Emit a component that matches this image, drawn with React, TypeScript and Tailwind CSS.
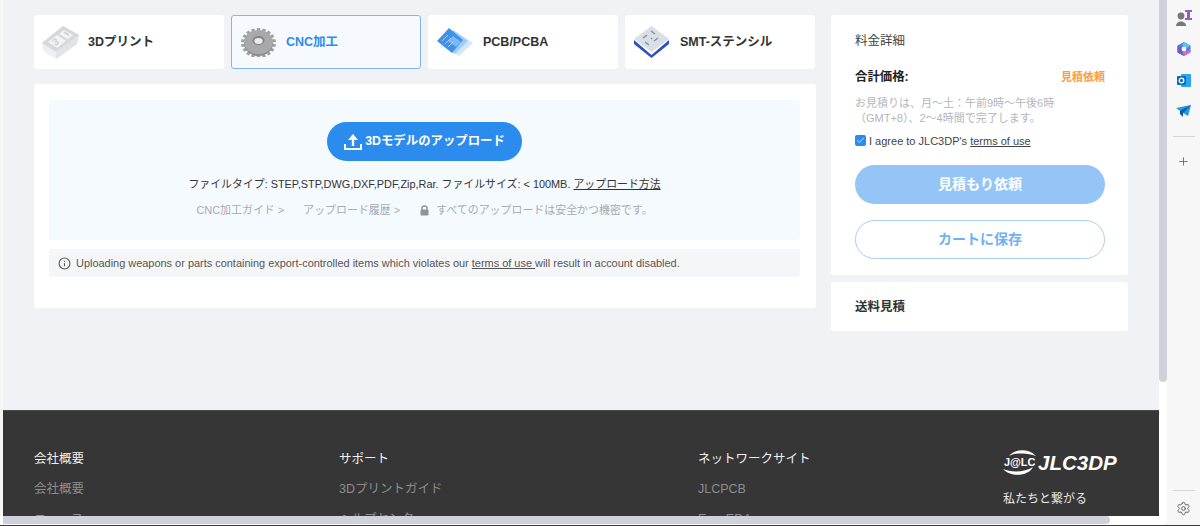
import { Info, Plus, Settings, Check } from 'lucide-react';

const font = { fontFamily: '"Liberation Sans", "Noto Sans CJK JP", sans-serif' };

const PrintIcon = () => (
  <svg width="37" height="33" viewBox="0 0 37 33">
    <path d="M0 17 L21 0 L37 9 L35 18 L14 33 L2 25 Z" fill="#e6e7e9" />
    <path d="M0 17 L21 0 L37 9 L14 26 Z" fill="#d6d8db" />
    <path d="M0 17 L14 26 L14 33 L2 25 Z" fill="#eeeff0" />
    <path d="M14 26 L37 9 L35 18 L14 33 Z" fill="#e2e3e5" />
    <path d="M6 16 L15 9 L24 15 L15 22 Z" fill="#f2f3f4" />
    <path d="M17 8 L22 4 L31 9 L26 13 Z" fill="#f2f3f4" />
    <text x="11" y="19" fontSize="10" fontWeight="700" fill="#cfd1d4" transform="rotate(-32 14 16)">3</text>
    <path d="M22 6 L27 9" stroke="#cfd1d4" strokeWidth="2" fill="none" />
  </svg>
);

const Gear = () => {
  const teeth = Array.from({ length: 18 }, (_, i) => i * 20);
  return (
    <svg width="35" height="30" viewBox="0 0 35 30">
      <g transform="translate(0 1) scale(1 0.86)">
        {teeth.map((a) => (
          <rect key={a} x="15.8" y="0" width="3.4" height="6" fill="#a2a2a4" transform={`rotate(${a} 17.5 17.5)`} />
        ))}
      </g>
      <ellipse cx="17.5" cy="16.5" rx="14.5" ry="12.5" fill="#8e8e90" />
      <ellipse cx="17.5" cy="15" rx="14.5" ry="12" fill="#a9a9ab" />
      <ellipse cx="17.5" cy="13.5" rx="6" ry="4.6" fill="#848486" />
      <ellipse cx="17.5" cy="14" rx="4.2" ry="3" fill="#ececed" />
    </svg>
  );
};

const PcbIcon = () => (
  <svg width="36" height="28" viewBox="0 0 36 28">
    <path d="M20 4 L36 15 L22 28 L10 20 Z" fill="#d4e6fc" />
    <path d="M16 2 L31 13 L18 26 L6 18 Z" fill="#a2ccf8" />
    <path d="M12 0 L26 12 L15 25 L0 13 Z" fill="#3d92ee" />
    <path d="M16 8 L24 14 L19 19 L11 13 Z" fill="#7db8f5" />
    <path d="M5 13 L11 7 M8 16 L14 10 M11 19 L16 14" stroke="#a8d0f8" strokeWidth="1" fill="none" />
  </svg>
);

const StencilIcon = () => (
  <svg width="35" height="32" viewBox="0 0 35 32">
    <path d="M0 14 L17.5 29 L35 14 L35 18 L17.5 32 L0 18 Z" fill="#2f4fc4" />
    <path d="M17.5 0 L35 13 L17.5 26 L0 13 Z" fill="#dadfe5" />
    <path d="M9 12 L13 9 M17 5 L21 8 M24 12 L20 15 M11 16 L15 19 M17 12 L18 13" stroke="#7d8fa8" strokeWidth="1.4" fill="none" />
  </svg>
);

const UploadSolid = () => (
  <svg width="18" height="16" viewBox="0 0 18 16" className="mr-[3px]">
    <path d="M9 0 L14 6 H10.2 V12 H7.8 V6 H4 Z" fill="#fff" />
    <path d="M1 10 V15 H17 V10" fill="none" stroke="#fff" strokeWidth="2" />
  </svg>
);

const LockSolid = () => (
  <svg width="9" height="11" viewBox="0 0 9 11">
    <path d="M2 5 V3.2 C2 0.3 7 0.3 7 3.2 V5" fill="none" stroke="#8f9298" strokeWidth="1.4" />
    <rect x="0.5" y="4.5" width="8" height="6" rx="1" fill="#8f9298" />
  </svg>
);

const tabs = [
  { label: '3Dプリント', icon: <PrintIcon />, box: 'w-[54px] pl-[8px]' },
  { label: 'CNC加工', icon: <Gear />, box: 'w-[54px] pl-[9px]', active: true },
  { label: 'PCB/PCBA', icon: <PcbIcon />, box: 'w-[55px] pl-[9px]' },
  { label: 'SMT-ステンシル', icon: <StencilIcon />, box: 'w-[55px] pl-[9px]' },
];

const TabCard = ({ label, icon, box, active }: (typeof tabs)[number]) => (
  <div
    className={`flex h-[54px] w-[190px] items-center rounded-[3px] ${
      active ? 'border border-[#7db8f5] bg-[#f6faff]' : 'bg-white'
    }`}
  >
    <div className={`shrink-0 ${box}`}>{icon}</div>
    <span className={`text-[12.5px] font-bold ${active ? 'text-[#2b8cf0]' : 'text-[#333333]'}`}>{label}</span>
  </div>
);

const FooterCol = ({ width, items }: { width: string; items: string[] }) => (
  <div className={width}>
    {items.map((text, i) => (
      <div key={text} className={i === 0 ? 'text-[#f0f0f0]' : 'mt-[14px] text-[#8d8d8d]'}>
        {text}
      </div>
    ))}
  </div>
);

export default function App() {
  return (
    <div style={font} className="relative flex h-[526px] w-[1200px] overflow-hidden bg-[#f7f7f7]">
      <div className="flex h-[525px] w-[1167px] flex-col overflow-hidden rounded-br-[6px] bg-white">
        <div className="flex min-h-0 flex-1">
          <div className="w-[3px] bg-[#f7f7f7]" />
          <div className="flex min-w-0 flex-1 flex-col bg-[#f0f2f6]">
            <div className="flex h-[395px] shrink-0 pt-[15px] pl-[31px]">
              <div className="w-[782px]">
                <div className="flex gap-[7px]">
                  {tabs.map((t) => (
                    <TabCard key={t.label} {...t} />
                  ))}
                </div>
                <div className="mt-[15px] h-[224px] rounded-[3px] bg-white pt-[16px] pr-[16px] pl-[15px]">
                  <div className="flex h-[140px] flex-col items-center rounded-[3px] bg-[#f5faff] pt-[22px]">
                    <div className="flex h-[39px] w-[195px] items-center justify-center rounded-full bg-[#2b8cee] text-[12.4px] font-bold text-white">
                      <UploadSolid />
                      3Dモデルのアップロード
                    </div>
                    <div className="mt-[14px] text-[10.9px] leading-[18px] text-[#333333]">
                      ファイルタイプ: STEP,STP,DWG,DXF,PDF,Zip,Rar. ファイルサイズ: &lt; 100MB.{' '}
                      <span className="underline">アップロード方法</span>
                    </div>
                    <div className="mt-[8px] flex items-center text-[10.95px] leading-[18px] text-[#a8abb2]">
                      <span>CNC加工ガイド &gt;</span>
                      <span className="ml-[19px]">アップロード履歴 &gt;</span>
                      <span className="ml-[20px]">
                        <LockSolid />
                      </span>
                      <span className="ml-[7px]">すべてのアップロードは安全かつ機密です。</span>
                    </div>
                  </div>
                  <div className="mt-[9px] flex h-[28px] items-center rounded-[3px] bg-[#f5f6f8] pl-[9px] text-[10.95px] text-[#555555]">
                    <Info size={13} className="mr-[5px] text-[#555555]" />
                    <span>
                      Uploading weapons or parts containing export-controlled items which violates our{' '}
                      <span className="underline">terms of use </span>will result in account disabled.
                    </span>
                  </div>
                </div>
              </div>
              <div className="ml-[15px] w-[297px]">
                <div className="h-[260px] rounded-[3px] bg-white pt-[18px] pr-[23px] pl-[24px]">
                  <div className="text-[12.5px] leading-[16px] text-[#444444]">料金詳細</div>
                  <div className="mt-[19px] flex items-center justify-between">
                    <span className="text-[12.4px] font-bold text-[#222222]">合計価格:</span>
                    <span className="text-[11px] font-bold text-[#ff9a3c]">見積依頼</span>
                  </div>
                  <div className="mt-[9px] text-[11px] leading-[15px] text-[#b4b6ba]">
                    <div>お見積りは、月～土：午前9時～午後6時</div>
                    <div>（GMT+8）、2～4時間で完了します。</div>
                  </div>
                  <div className="mt-[7px] flex items-center text-[11px] leading-[16px] text-[#444444]">
                    <span className="mr-[3px] flex h-[11px] w-[11px] items-center justify-center rounded-[2px] bg-[#2b8cee]">
                      <Check size={9} strokeWidth={2} className="text-white" />
                    </span>
                    <span>
                      I agree to JLC3DP's <span className="underline">terms of use</span>
                    </span>
                  </div>
                  <div className="mt-[16px] flex h-[39px] items-center justify-center rounded-full bg-[#95c5f6] text-[14px] font-bold text-white">
                    見積もり依頼
                  </div>
                  <div className="mt-[16px] flex h-[39px] items-center justify-center rounded-full border border-[#a6d0f8] text-[14px] font-bold text-[#6fb1f3]">
                    カートに保存
                  </div>
                </div>
                <div className="mt-[7px] flex h-[49px] items-center rounded-[3px] bg-white px-[24px] pt-[1px] text-[12.5px] font-bold text-[#333333]">
                  送料見積
                </div>
              </div>
            </div>
            <div className="flex min-h-0 flex-1 flex-col">
              <div className="h-[15px] shrink-0" />
              <div className="flex min-h-0 flex-1 overflow-hidden border-t border-[#4a4a4a] bg-[#363636] pt-[40px] pl-[31px] text-[12.5px] leading-[16px]">
                <FooterCol width="w-[305px]" items={['会社概要', '会社概要', 'ニュース']} />
                <FooterCol width="w-[359px]" items={['サポート', '3Dプリントガイド', 'ヘルプセンター']} />
                <FooterCol width="w-[305px]" items={['ネットワークサイト', 'JLCPCB', 'EasyEDA']} />
                <div className="-mt-[1px]">
                  <div className="flex h-[25px] items-center">
                    <svg width="34" height="25" viewBox="0 0 34 25" className="shrink-0">
                      <path d="M6 6 C11 -1 25 -2 33 6 C25 2.5 13 2.5 6 6 Z" fill="#fff" />
                      <path d="M0 19 C9 23 22 22 30 17 C25 27 7 27 0 19 Z" fill="#fff" />
                      <text x="1" y="16" fontSize="11" fontWeight="700" fill="#fff">J@LC</text>
                    </svg>
                    <span className="ml-[1px] text-[20.5px] leading-[22px] font-bold text-white italic">JLC3DP</span>
                  </div>
                  <div className="mt-[16px] text-[12px] text-[#e8e8e8]">私たちと繋がる</div>
                </div>
              </div>
            </div>
          </div>
          <div className="w-[8px] shrink-0">
            <div className="h-[382px] rounded-b-[4px] bg-[#cfd2db]" />
          </div>
        </div>
        <div className="flex h-[9px] shrink-0">
          <div className="ml-[3px] h-[8px] w-[1107px] rounded-r-[4px] bg-[#cfd2db]" />
        </div>
      </div>
      <div className="flex h-[525px] w-[33px] flex-col items-center bg-[#f7f7f7]">
        <svg width="18" height="18" viewBox="0 0 18 18" className="mt-[9px]">
          <circle cx="6" cy="7" r="3.4" fill="#77787a" />
          <path d="M1 17 C1 11 11 11 11 17 Z" fill="#77787a" />
          <path d="M10 1 H17 V3 H15 V9 H17 V11 H10 V9 H12 V3 H10 Z" fill="#8a63c9" />
        </svg>
        <svg width="16" height="16" viewBox="0 0 16 16" className="mt-[14px]">
          <path d="M8 1 L14.5 4.5 V11.5 L8 15 L1.5 11.5 V4.5 Z" fill="#4f7fe0" />
          <path d="M8 1 L14.5 4.5 L11 7 L6 4 Z" fill="#5fc4e8" />
          <path d="M1.5 5 L6 7 V12 L8 15 L1.5 11.5 Z" fill="#7a55c8" />
          <path d="M14.5 9 V11.5 L8 15 L7 11 Z" fill="#d070c8" />
          <circle cx="8" cy="8" r="2.4" fill="#f7f7f7" />
        </svg>
        <svg width="14" height="15" viewBox="0 0 14 15" className="mt-[16px]">
          <rect x="4" y="1" width="10" height="13" rx="1" fill="#28a8ea" />
          <rect x="0" y="3" width="9" height="9" rx="1" fill="#0f6cbd" />
          <circle cx="4.5" cy="7.5" r="2.3" fill="none" stroke="#fff" strokeWidth="1.3" />
        </svg>
        <svg width="15" height="13" viewBox="0 0 15 13" className="mt-[17px]">
          <path d="M0 3 L15 0 L12 11 L7 8 Z" fill="#1f9be0" />
          <path d="M4 6 L15 0 L7 8 L7 12 L4 9 Z" fill="#0b5aa8" />
        </svg>
        <div className="mt-[18px] h-px w-[22px] bg-[#d8d8d8]" />
        <Plus size={13} strokeWidth={1.4} className="mt-[18px] text-[#555555]" />
        <div className="mt-auto mb-[10px] h-px w-[22px] bg-[#d8d8d8]" />
        <Settings size={15} strokeWidth={1.4} className="mb-[9px] text-[#555555]" />
      </div>
      <div className="absolute top-[525px] left-0 h-px w-[1200px] bg-[#3a3a3a]" />
    </div>
  );
}
